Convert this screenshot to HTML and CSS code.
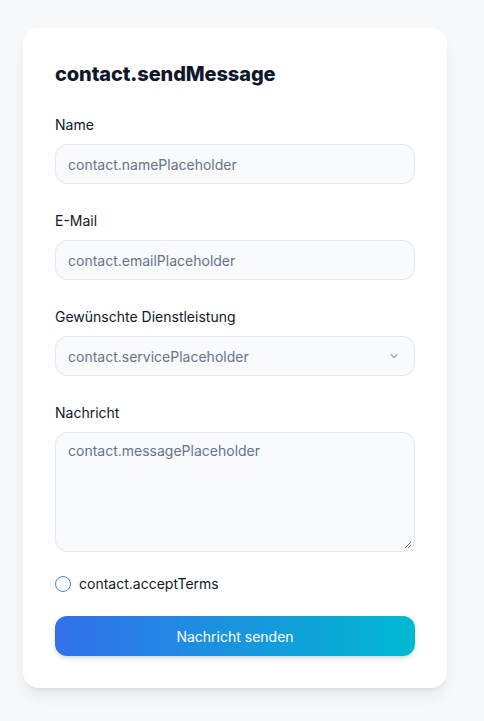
FILE: index.html
```html
<!DOCTYPE html>
<html lang="de">
<head>
<meta charset="utf-8">
<title>Kontakt</title>
<link rel="stylesheet" href="styles.css">
</head>
<body>
<div class="page">
  <form class="card">
    <h2 class="title">contact.sendMessage</h2>
    <div class="field">
      <label class="label">Name</label>
      <div class="input">contact.namePlaceholder</div>
    </div>
    <div class="field">
      <label class="label">E-Mail</label>
      <div class="input">contact.emailPlaceholder</div>
    </div>
    <div class="field">
      <label class="label">Gewünschte Dienstleistung</label>
      <div class="input select">
        <span>contact.servicePlaceholder</span>
        <svg class="chev" width="12" height="12" viewBox="0 0 12 12"><path d="M3 4.5 L6 7.5 L9 4.5" fill="none" stroke="#9ca3af" stroke-width="1.2" stroke-linecap="round" stroke-linejoin="round"/></svg>
      </div>
    </div>
    <div class="field">
      <label class="label">Nachricht</label>
      <div class="input textarea">contact.messagePlaceholder
        <svg class="grip" width="8" height="8" viewBox="0 0 8 8"><path d="M7 1 L1 7 M7 4 L4 7" stroke="#6b7280" stroke-width="1"/></svg>
      </div>
    </div>
    <div class="check">
      <span class="radio"></span>
      <span class="check-text">contact.acceptTerms</span>
    </div>
    <button type="button" class="btn">Nachricht senden</button>
  </form>
</div>
</body>
</html>
```

FILE: styles.css
```css
* { box-sizing: border-box; }
html, body { margin: 0; padding: 0; }
body {
  background: #f7f8fa;
  font-family: Inter, "Noto Sans", sans-serif;
  width: 484px;
  height: 721px;
  overflow: hidden;
}
.page {
  padding: 28px 37px 0 23px;
}
.card {
  background: #fff;
  border-radius: 16px;
  padding: 32px;
  box-shadow: 0 10px 15px -3px rgba(0,0,0,0.08), 0 4px 6px -4px rgba(0,0,0,0.08);
  display: flex;
  flex-direction: column;
}
.title {
  margin: 0 0 27px;
  font-size: 20px;
  line-height: 28px;
  font-weight: 800;
  color: #0f172a;
  letter-spacing: -0.1px;
}
.field {
  display: flex;
  flex-direction: column;
  gap: 9px;
  margin-bottom: 27px;
}
.label {
  font-size: 14px;
  line-height: 20px;
  font-weight: 400;
  color: #0f172a;
}
.input {
  height: 40px;
  border: 1px solid #e2e8f0;
  background: #f8fafc;
  border-radius: 12px;
  padding: 0 12px;
  display: flex;
  align-items: center;
  font-size: 14px;
  color: #64748b;
}
.select { justify-content: space-between; padding-right: 14px; }
.textarea {
  height: 120px;
  align-items: flex-start;
  padding-top: 9px;
  position: relative;
}
.grip { position: absolute; right: 2px; bottom: 2px; }
.check {
  display: flex;
  align-items: center;
  gap: 8px;
  margin-top: -5px;
  margin-bottom: 22px;
}
.radio {
  width: 16px;
  height: 16px;
  border: 1.5px solid #3b82f6;
  border-radius: 50%;
}
.check-text {
  font-size: 14px;
  line-height: 20px;
  font-weight: 400;
  color: #0f172a;
}
.btn {
  height: 40px;
  border: none;
  border-radius: 12px;
  background: linear-gradient(90deg, #3370ec, #00b9d0);
  color: #fff;
  font-family: Inter, sans-serif;
  font-size: 14px;
  font-weight: 400;
  box-shadow: 0 4px 6px -1px rgba(0,0,0,0.1), 0 2px 4px -2px rgba(0,0,0,0.1);
}
```
